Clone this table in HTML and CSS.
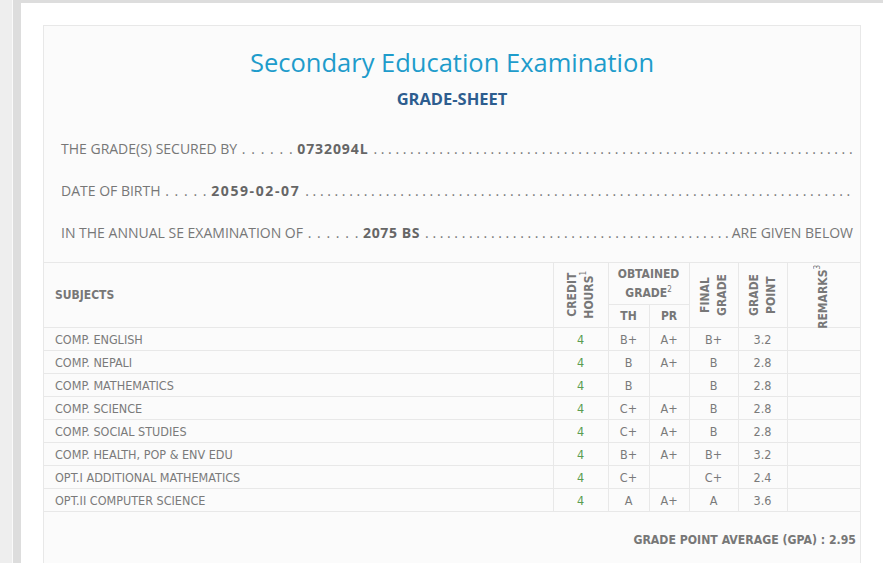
FILE: index.html
```html
<!DOCTYPE html>
<html>
<head>
<meta charset="utf-8">
<link rel="stylesheet" href="styles.css">
</head>
<body>
<div class="layout">
  <div class="side"></div>
  <div class="gap"></div>
  <div class="main">
    <div class="panel">
      <h1 class="title">Secondary Education Examination</h1>
      <h2 class="subtitle">GRADE-SHEET</h2>
      <div class="info">
        <div class="line"><span class="lbl">THE GRADE(S) SECURED BY <span class="lead">. . . . . .</span> <b class="v1">0732094L</b></span><span class="fill">. . . . . . . . . . . . . . . . . . . . . . . . . . . . . . . . . . . . . . . . . . . . . . . . . . . . . . . . . . . . . . . . . . . . . . . . . . . . . . . . . . . . . . . . . . . . . . . . . . . . . . . . . . . . . . . . . . . . . . .</span></div>
        <div class="line"><span class="lbl">DATE OF BIRTH <span class="lead">. . . . .</span> <b class="v2">2059-02-07</b></span><span class="fill">. . . . . . . . . . . . . . . . . . . . . . . . . . . . . . . . . . . . . . . . . . . . . . . . . . . . . . . . . . . . . . . . . . . . . . . . . . . . . . . . . . . . . . . . . . . . . . . . . . . . . . . . . . . . . . . . . . . . . . . . . . . . . . . . . . . . .</span></div>
        <div class="line"><span class="lbl">IN THE ANNUAL SE EXAMINATION OF <span class="lead">. . . . . .</span> <b class="v3">2075 BS</b></span><span class="fill">. . . . . . . . . . . . . . . . . . . . . . . . . . . . . . . . . . . . . . . . . . . . . . . . . . . . . . . . . . . . . . . . . . . . . . . . . . . . . . . . . . . . . . . .</span><span class="end">ARE GIVEN BELOW</span></div>
      </div>
      <table class="grades">
        <colgroup>
          <col class="c-sub"><col class="c-cr"><col class="c-th"><col class="c-pr"><col class="c-fg"><col class="c-gp"><col class="c-rm">
        </colgroup>
        <thead>
          <tr class="h1">
            <th rowspan="2" class="subj">SUBJECTS</th>
            <th rowspan="2"><div class="vt">CREDIT<br>HOURS<sup>1</sup></div></th>
            <th colspan="2" class="obt">OBTAINED<br>GRADE<sup>2</sup></th>
            <th rowspan="2"><div class="vt">FINAL<br>GRADE</div></th>
            <th rowspan="2"><div class="vt">GRADE<br>POINT</div></th>
            <th rowspan="2" class="rm"><div class="vt">REMARKS<sup>3</sup></div></th>
          </tr>
          <tr class="h2">
            <th>TH</th>
            <th>PR</th>
          </tr>
        </thead>
        <tbody>
          <tr><td class="sn">COMP. ENGLISH</td><td class="cr">4</td><td>B+</td><td>A+</td><td>B+</td><td>3.2</td><td></td></tr>
          <tr><td class="sn">COMP. NEPALI</td><td class="cr">4</td><td>B</td><td>A+</td><td>B</td><td>2.8</td><td></td></tr>
          <tr><td class="sn">COMP. MATHEMATICS</td><td class="cr">4</td><td>B</td><td></td><td>B</td><td>2.8</td><td></td></tr>
          <tr><td class="sn">COMP. SCIENCE</td><td class="cr">4</td><td>C+</td><td>A+</td><td>B</td><td>2.8</td><td></td></tr>
          <tr><td class="sn">COMP. SOCIAL STUDIES</td><td class="cr">4</td><td>C+</td><td>A+</td><td>B</td><td>2.8</td><td></td></tr>
          <tr><td class="sn">COMP. HEALTH, POP &amp; ENV EDU</td><td class="cr">4</td><td>B+</td><td>A+</td><td>B+</td><td>3.2</td><td></td></tr>
          <tr><td class="sn">OPT.I ADDITIONAL MATHEMATICS</td><td class="cr">4</td><td>C+</td><td></td><td>C+</td><td>2.4</td><td></td></tr>
          <tr><td class="sn">OPT.II COMPUTER SCIENCE</td><td class="cr">4</td><td>A</td><td>A+</td><td>A</td><td>3.6</td><td></td></tr>
        </tbody>
      </table>
      <div class="gpa">GRADE POINT AVERAGE (GPA) : 2.95</div>
    </div>
  </div>
</div>
</body>
</html>
```

FILE: styles.css
```css
html, body {
  margin: 0;
  padding: 0;
  background: #fff;
  height: 100%;
  overflow: hidden;
}
.layout {
  display: flex;
  height: 563px;
}
.side {
  width: 12px;
  flex: none;
  background: #eeeeee;
}
.gap {
  width: 1px;
  flex: none;
  background: #fafafa;
}
.main {
  flex: 1;
  min-width: 0;
  display: flex;
  flex-direction: column;
  border-top: 3px solid #dddddd;
  border-left: 8px solid #dddddd;
  padding: 22px 22px 0 22px;
  background: #fff;
}
.panel {
  flex: 1;
  min-width: 0;
  border: 1px solid #e8e8e8;
  border-bottom: none;
  background: #fbfbfb;
}
.title {
  margin: 20px 0 0;
  text-align: center;
  font-family: "Open Sans", sans-serif;
  font-weight: normal;
  font-size: 25.5px;
  line-height: 32px;
  color: #1e9ccb;
}
.subtitle {
  margin: 10px 0 0;
  text-align: center;
  font-family: "Open Sans", sans-serif;
  font-weight: bold;
  font-size: 16.5px;
  line-height: 22px;
  color: #2d5d8f;
}
.info {
  margin-top: 17px;
  padding: 0 7px 0 17px;
  font-family: "Open Sans", sans-serif;
  font-size: 14px;
  color: #777;
}
.line {
  display: flex;
  height: 42px;
  align-items: center;
  white-space: nowrap;
  min-width: 0;
}
.line b {
  color: #666;
}
.lead {
  letter-spacing: 1.05px;
  margin-left: 1px;
}
.v1 { letter-spacing: 0.9px; }
.v2 { letter-spacing: 1.6px; }
.v3 { letter-spacing: 0.6px; }
.lbl {
  flex: none;
}
.fill {
  flex: 1;
  min-width: 0;
  overflow: hidden;
  white-space: nowrap;
  margin-left: 5px;
}
.end {
  flex: none;
  padding-left: 3px;
}
.grades {
  margin-top: 9px;
  width: 100%;
  border-collapse: collapse;
  table-layout: fixed;
  font-family: "DejaVu Sans Condensed", "DejaVu Sans", sans-serif;
  color: #7a7a7a;
}
.c-sub { width: 509px; }
.c-cr { width: 55px; }
.c-th { width: 41px; }
.c-pr { width: 40px; }
.c-fg { width: 49px; }
.c-gp { width: 49px; }
.c-rm { width: auto; }
.grades th, .grades td {
  border: 1px solid #e8e8e8;
  padding: 0;
  text-align: center;
  vertical-align: middle;
}
.grades tr > :first-child { border-left: none; }
.grades tr > :last-child { border-right: none; }
.grades th {
  font-weight: bold;
  color: #777;
  font-size: 12px;
  line-height: 16px;
}
.grades .h1 { height: 42px; }
.grades .h2 { height: 23px; }
.grades th.subj {
  text-align: left;
  padding-left: 11px;
}
.grades th.obt {
  line-height: 19px;
  padding-top: 1px;
}
.grades sup {
  font-size: 8px;
  line-height: 0;
  vertical-align: 5px;
  font-weight: normal;
}
.vt {
  display: inline-block;
  writing-mode: vertical-rl;
  transform: rotate(180deg);
  line-height: 17px;
  text-align: center;
  margin: -10px 0;
  vertical-align: middle;
}
.grades th.rm .vt {
  position: relative;
  top: 2px;
}
.grades tbody tr { height: 23px; }
.grades td {
  font-size: 12.5px;
}
.grades td.sn {
  text-align: left;
  padding-left: 11px;
}
.grades td.cr { color: #5a9d50; }
.gpa {
  text-align: right;
  padding: 18px 4px 0 0;
  font-family: "DejaVu Sans Condensed", "DejaVu Sans", sans-serif;
  font-weight: bold;
  font-size: 12.2px;
  color: #777;
  line-height: 20px;
}
```
